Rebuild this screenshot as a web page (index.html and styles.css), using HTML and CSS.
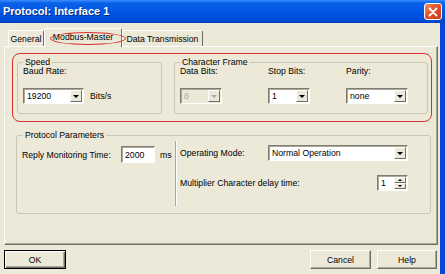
FILE: index.html
```html
<!DOCTYPE html>
<html>
<head>
    <title>Protocol: Interface 1</title>
    <link rel="stylesheet" href="styles.css">
</head>
<body>

    <div class="window">
        <div class="titlebar">
            <span class="title">Protocol: Interface 1</span>
            <button type="button" class="close">
                <svg width="10" height="10" viewBox="0 0 10 10"><path d="M1.5 1.5 L8.5 8.5 M8.5 1.5 L1.5 8.5" stroke="#fff" stroke-width="1.8" stroke-linecap="round"/></svg>
            </button>
        </div>
        <div class="client">
            <div class="tabs">
                <div class="tab tab-general">General</div>
                <div class="tab tab-modbus active">Modbus-Master<span class="mark"></span></div>
                <div class="tab tab-data">Data Transmission</div>
            </div>
            <div class="panel">
                <div class="highlight">
                    <fieldset class="group speed">
                        <legend>Speed</legend>
                        <div class="field-label">Baud Rate:</div>
                        <div class="field-row">
                            <div class="combo w-baud"><span class="value">19200</span><span class="arrow"></span></div>
                            <span class="unit">Bits/s</span>
                        </div>
                    </fieldset>
                    <fieldset class="group frame">
                        <legend>Character Frame</legend>
                        <div class="frame-grid">
                            <div class="field-label">Data Bits:</div>
                            <div class="field-label">Stop Bits:</div>
                            <div class="field-label">Parity:</div>
                            <div class="combo w-small disabled"><span class="value">8</span><span class="arrow"></span></div>
                            <div class="combo w-small"><span class="value">1</span><span class="arrow"></span></div>
                            <div class="combo w-parity"><span class="value">none</span><span class="arrow"></span></div>
                        </div>
                    </fieldset>
                </div>
                <fieldset class="group params">
                    <legend>Protocol Parameters</legend>
                    <div class="col-left">
                        <div class="param-row">
                            <span class="reply-label">Reply Monitoring Time:</span>
                            <div class="textbox w-reply">2000</div>
                            <span class="unit">ms</span>
                        </div>
                    </div>
                    <div class="separator"></div>
                    <div class="col-right">
                        <div class="param-row">
                            <span class="mode-label">Operating Mode:</span>
                            <div class="combo w-mode"><span class="value">Normal Operation</span><span class="arrow"></span></div>
                        </div>
                        <div class="param-row delay-row">
                            <span class="delay-label">Multiplier Character delay time:</span>
                            <div class="spin">
                                <span class="value">1</span>
                                <div class="spin-buttons">
                                    <span class="spin-btn"><span class="tri-up"></span></span>
                                    <span class="spin-btn"><span class="tri-down"></span></span>
                                </div>
                            </div>
                        </div>
                    </div>
                </fieldset>
            </div>
            <div class="buttons">
                <button type="button" class="btn btn-ok">OK</button>
                <div class="btn-group">
                    <button type="button" class="btn btn-cancel">Cancel</button>
                    <button type="button" class="btn btn-help">Help</button>
                </div>
            </div>
        </div>
    </div>

</body>
</html>
```

FILE: styles.css
```css
body {
    margin: 0;
    font-family: "Liberation Sans", Arial, sans-serif;
    font-size: 8.7px;
    color: #000;
}

.window {
    width: 445px;
    height: 274px;
    display: flex;
    flex-direction: column;
    overflow: hidden;
}

/* title bar */
.titlebar {
    height: 23px;
    flex: none;
    display: flex;
    align-items: center;
    justify-content: space-between;
    padding: 0 3px 0 3px;
    box-sizing: border-box;
    background: linear-gradient(#3a8dff 0, #0a62e8 3px, #0058e6 45%, #004ddc 80%, #0040c4 100%);
}

.title {
    color: #fff;
    font-size: 11px;
    font-weight: bold;
    text-shadow: 1px 1px 0 #0a2a80;
    padding-bottom: 1px;
}

.close {
    width: 18px;
    height: 17px;
    padding: 0;
    border: 1px solid #fff;
    border-radius: 3px;
    background: linear-gradient(135deg, #f09070 0, #e2542c 45%, #c83814 100%);
    display: flex;
    align-items: center;
    justify-content: center;
}

/* client area */
.client {
    flex: 1;
    background: #ece9d8;
    border-right: 5px solid #0a44d4;
    display: flex;
    flex-direction: column;
}

.tabs {
    height: 18px;
    margin-top: 5px;
    padding-left: 8px;
    display: flex;
    align-items: flex-end;
}

.tab {
    height: 16px;
    box-sizing: border-box;
    display: flex;
    align-items: center;
    justify-content: center;
    border-top: 1px solid #fff;
    border-left: 1px solid #fff;
    border-right: 1px solid #716f64;
    border-radius: 2px 2px 0 0;
    background: #ece9d8;
}

.tab-general {
    width: 36px;
}

.tab-modbus {
    width: 78px;
}

.tab-data {
    width: 81px;
}

.tab.active {
    height: 19px;
    margin-bottom: -1px;
    padding-bottom: 2px;
    position: relative;
    z-index: 1;
}

.tab .mark {
    position: absolute;
    left: 5px;
    top: 3px;
    width: 74px;
    height: 11px;
    border: 1px solid #d8302c;
    border-radius: 50%;
}

.panel {
    height: 199px;
    width: 434px;
    margin-left: 4px;
    box-sizing: border-box;
    padding: 6px 5px 0 7px;
    border: 1px solid;
    border-color: #fff #716f64 #716f64 #fff;
    box-shadow: inset -1px -1px 0 #aca899;
}

.highlight {
    display: flex;
    gap: 12px;
    padding: 4px 0 7px 4px;
    border: 1px solid #d8302c;
    border-radius: 8px;
}

/* group boxes */
.group {
    margin: 0;
    min-width: 0;
    box-sizing: border-box;
    border: 1px solid #c9c6b6;
    border-radius: 3px;
    padding: 0 5px 9px;
}

.group legend {
    padding: 0 2px;
    line-height: 8px;
}

.speed {
    width: 145px;
}

.frame {
    width: 254px;
}

.field-label {
    line-height: 10px;
}

.field-row {
    margin-top: 12px;
    display: flex;
    align-items: center;
}

.unit {
    margin-left: 6px;
}

.frame-grid {
    display: grid;
    grid-template-columns: 88px 78px 62px;
    row-gap: 12px;
    align-items: start;
}

/* combo boxes */
.combo {
    height: 16px;
    box-sizing: border-box;
    display: flex;
    align-items: center;
    background: #fff;
    border: 1px solid;
    border-color: #7f7d72 #fff #fff #7f7d72;
    box-shadow: inset 1px 1px 0 #aca899;
    padding: 1px;
}

.combo .value {
    flex: 1;
    padding-left: 2px;
    white-space: nowrap;
}

.combo .arrow {
    width: 12px;
    height: 12px;
    box-sizing: border-box;
    background: #ece9d8;
    border: 1px solid;
    border-color: #fff #716f64 #716f64 #fff;
    display: flex;
    align-items: center;
    justify-content: center;
}

.combo .arrow::after {
    content: "";
    border-top: 3px solid #000;
    border-left: 3px solid transparent;
    border-right: 3px solid transparent;
}

.combo.disabled {
    background: #ece9d8;
    color: #aca899;
}

.combo.disabled .arrow::after {
    border-top-color: #aca899;
}

.w-baud {
    width: 61px;
}

.w-small {
    width: 42px;
}

.w-parity {
    width: 62px;
}

.w-mode {
    width: 140px;
}

/* protocol parameters */
.params {
    margin: 9px 1px 0 4px;
    width: 415px;
    padding: 0;
    display: flex;
}

.params legend {
    margin-left: 6px;
}

.col-left {
    width: 158px;
    box-sizing: border-box;
    padding: 7px 0 0 5px;
}

.separator {
    width: 2px;
    margin: 2px 0 7px;
    box-sizing: border-box;
    border-left: 1px solid #aca899;
    border-right: 1px solid #fff;
}

.col-right {
    flex: 1;
    padding: 6px 22px 22px 3px;
}

.param-row {
    display: flex;
    align-items: center;
}

.reply-label {
    width: 99px;
}

.param-row .unit {
    margin-left: 5px;
}

.textbox {
    height: 17px;
    box-sizing: border-box;
    background: #fff;
    border: 1px solid;
    border-color: #7f7d72 #fff #fff #7f7d72;
    box-shadow: inset 1px 1px 0 #aca899;
    padding: 1px 3px;
    display: flex;
    align-items: center;
}

.w-reply {
    width: 34px;
}

.mode-label {
    width: 88px;
}

.delay-row {
    margin-top: 14px;
}

.delay-label {
    flex: 1;
}

.spin {
    width: 31px;
    height: 16px;
    box-sizing: border-box;
    display: flex;
    background: #fff;
    border: 1px solid;
    border-color: #7f7d72 #fff #fff #7f7d72;
    box-shadow: inset 1px 1px 0 #aca899;
    padding: 1px;
}

.spin .value {
    flex: 1;
    padding-left: 2px;
    line-height: 12px;
}

.spin-buttons {
    width: 12px;
    display: flex;
    flex-direction: column;
}

.spin-btn {
    flex: 1;
    box-sizing: border-box;
    background: #ece9d8;
    border: 1px solid;
    border-color: #fff #716f64 #716f64 #fff;
    display: flex;
    align-items: center;
    justify-content: center;
}

.tri-up {
    border-bottom: 2px solid #000;
    border-left: 2px solid transparent;
    border-right: 2px solid transparent;
}

.tri-down {
    border-top: 2px solid #000;
    border-left: 2px solid transparent;
    border-right: 2px solid transparent;
}

/* dialog buttons */
.buttons {
    margin-top: 5px;
    padding: 0 3px 0 4px;
    display: flex;
    justify-content: space-between;
}

.btn-group {
    display: flex;
    gap: 6px;
}

.btn {
    height: 19px;
    padding: 0;
    font-family: inherit;
    font-size: 8.7px;
    color: #000;
    background: #ece9d8;
    border: 1px solid;
    border-color: #fff #716f64 #716f64 #fff;
    box-shadow: inset -1px -1px 0 #aca899;
}

.btn-ok {
    width: 62px;
    border: 1px solid #000;
    box-shadow: inset 1px 1px 0 #fff, inset -1px -1px 0 #716f64, inset -2px -2px 0 #aca899;
}

.btn-cancel {
    width: 61px;
}

.btn-help {
    width: 60px;
}
```
